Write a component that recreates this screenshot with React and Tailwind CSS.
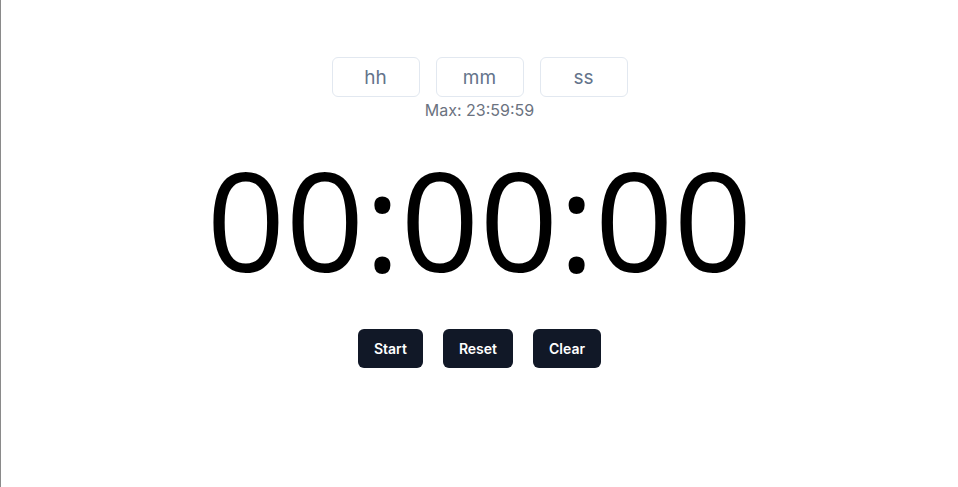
import React, { useState } from 'react';

const App = () => {
  const [h, setH] = useState('');
  const [m, setM] = useState('');
  const [s, setS] = useState('');

  const inputClass =
    'w-[88px] h-[40px] rounded-md border border-[#e2e8f0] bg-white text-center text-[19px] text-[#64748b] placeholder:text-[#64748b] focus:outline-none';

  return (
    <div className="min-h-[487px] border-l border-[#8a8a8a] bg-white flex flex-col items-center font-['Inter',sans-serif]">
      <div className="mt-[57px] flex gap-[16px]">
        <input className={inputClass} placeholder="hh" value={h} onChange={(e) => setH(e.target.value)} />
        <input className={inputClass} placeholder="mm" value={m} onChange={(e) => setM(e.target.value)} />
        <input className={inputClass} placeholder="ss" value={s} onChange={(e) => setS(e.target.value)} />
      </div>
      <div className="mt-[1px] text-[16px] leading-[24px] text-[#6b7280]">Max: 23:59:59</div>
      <div className="mt-[16px] text-[138px] leading-[160px] text-black font-['Open_Sans',sans-serif]">00:00:00</div>
      <div className="mt-[31px] flex gap-[20px]">
        <button className="h-[39px] px-4 rounded-md bg-[#111827] text-white text-sm font-semibold">Start</button>
        <button className="h-[39px] px-4 rounded-md bg-[#111827] text-white text-sm font-semibold">Reset</button>
        <button className="h-[39px] px-4 rounded-md bg-[#111827] text-white text-sm font-semibold">Clear</button>
      </div>
    </div>
  );
};

export default App;
